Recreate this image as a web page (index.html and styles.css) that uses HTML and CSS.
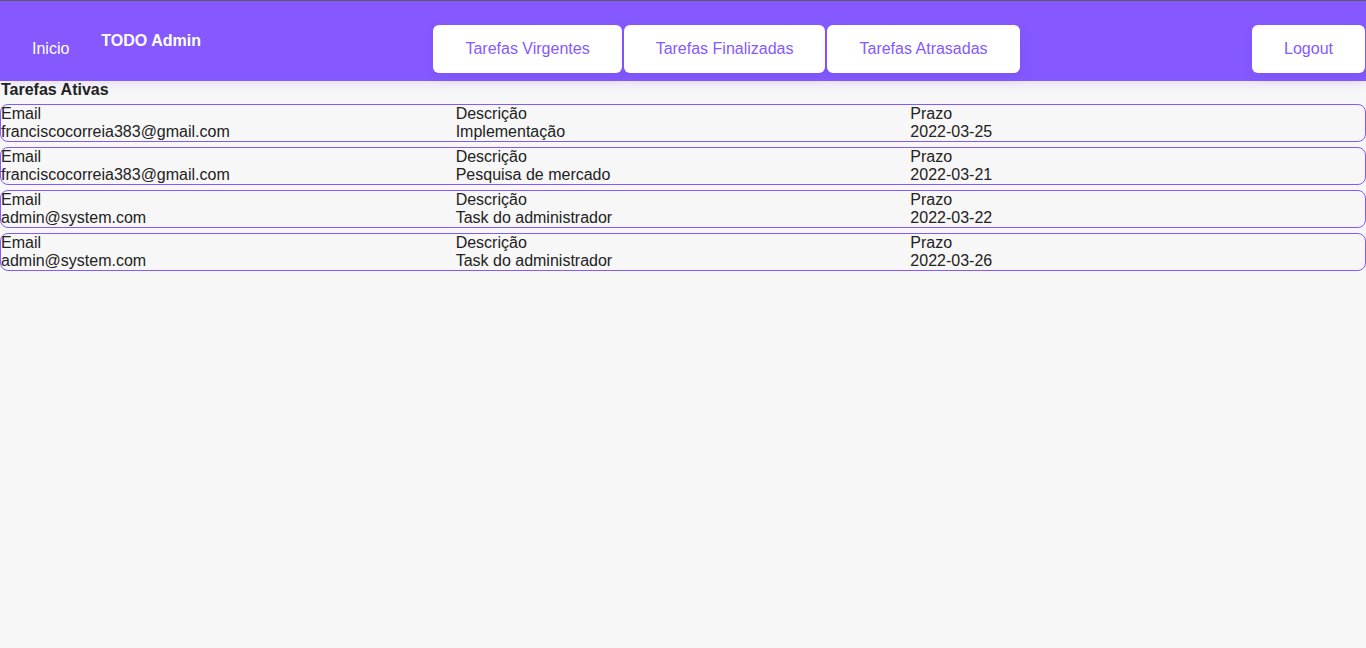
FILE: index.html
```html
<!DOCTYPE html>
<html lang="pt">
<head>
<meta charset="utf-8">
<title>TODO Admin</title>
<link rel="stylesheet" href="styles.css">
</head>
<body>
<header class="topbar">
  <div class="left">
    <a class="nav-link">Inicio</a>
    <span class="brand">TODO Admin</span>
  </div>
  <nav class="tabs">
    <a class="btn">Tarefas Virgentes</a>
    <a class="btn">Tarefas Finalizadas</a>
    <a class="btn">Tarefas Atrasadas</a>
  </nav>
  <a class="btn logout">Logout</a>
</header>
<main class="content">
  <h2 class="title">Tarefas Ativas</h2>
  <div class="card">
    <div class="col"><div>Email</div><div>franciscocorreia383@gmail.com</div></div>
    <div class="col"><div>Descrição</div><div>Implementação</div></div>
    <div class="col"><div>Prazo</div><div>2022-03-25</div></div>
  </div>
  <div class="card">
    <div class="col"><div>Email</div><div>franciscocorreia383@gmail.com</div></div>
    <div class="col"><div>Descrição</div><div>Pesquisa de mercado</div></div>
    <div class="col"><div>Prazo</div><div>2022-03-21</div></div>
  </div>
  <div class="card">
    <div class="col"><div>Email</div><div>admin@system.com</div></div>
    <div class="col"><div>Descrição</div><div>Task do administrador</div></div>
    <div class="col"><div>Prazo</div><div>2022-03-22</div></div>
  </div>
  <div class="card">
    <div class="col"><div>Email</div><div>admin@system.com</div></div>
    <div class="col"><div>Descrição</div><div>Task do administrador</div></div>
    <div class="col"><div>Prazo</div><div>2022-03-26</div></div>
  </div>
</main>
</body>
</html>
```
FILE: styles.css
```css
* { box-sizing: border-box; }
html, body {
  margin: 0;
  padding: 0;
  background: #f7f7f7;
  font-family: "Liberation Sans", Arial, sans-serif;
  font-size: 16px;
  color: #222;
}
body { border-top: 1px solid #5a5a5a; }
.topbar {
  height: 80px;
  background: #8559ff;
  display: flex;
  justify-content: space-between;
  align-items: flex-start;
  padding-top: 24px;
  box-shadow: 0 4px 10px rgba(133, 89, 255, 0.12);
}
.left {
  display: flex;
  align-items: flex-start;
}
.nav-link {
  color: #fff;
  height: 48px;
  line-height: 48px;
  padding: 0 32px;
}
.brand {
  color: #fff;
  font-weight: bold;
  margin-top: 7px;
  line-height: 18px;
}
.tabs {
  display: flex;
  gap: 2px;
}
.btn {
  display: block;
  height: 48px;
  line-height: 48px;
  padding: 0 32px;
  background: #fff;
  color: #8559ff;
  border-radius: 6px;
  box-shadow: 2px 4px 8px rgba(100, 70, 220, 0.25);
}
.logout { margin-right: 1px; }
.content {
  display: flex;
  flex-direction: column;
  gap: 5px;
}
.title {
  margin: 0;
  padding-left: 1px;
  font-size: 16px;
  font-weight: bold;
  line-height: 18px;
}
.card {
  display: grid;
  grid-template-columns: 1fr 1fr 1fr;
  border: 1px solid #8559ff;
  border-radius: 8px;
  line-height: 18px;
}
.col { padding-left: 0; }
```
